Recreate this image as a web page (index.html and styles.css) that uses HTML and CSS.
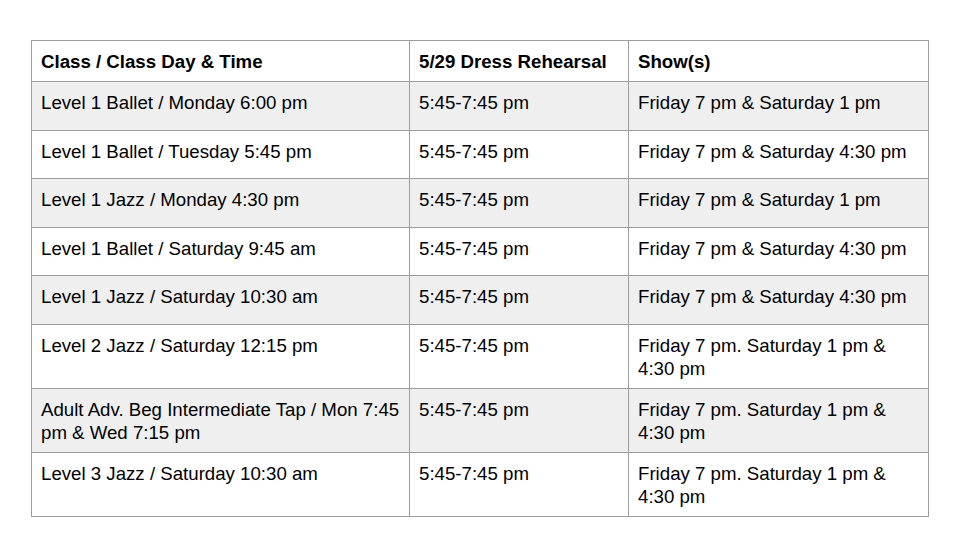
FILE: index.html
```html
<!DOCTYPE html>
<html>
<head>
<meta charset="utf-8">
<link rel="stylesheet" href="styles.css">
</head>
<body>
<div class="page">
<table class="sched">
<colgroup><col class="c1"><col class="c2"><col class="c3"></colgroup>
<thead>
<tr><th>Class / Class Day &amp; Time</th><th>5/29 Dress Rehearsal</th><th>Show(s)</th></tr>
</thead>
<tbody>
<tr class="alt"><td>Level 1 Ballet / Monday 6:00 pm</td><td>5:45-7:45 pm</td><td>Friday 7 pm &amp; Saturday 1 pm</td></tr>
<tr><td>Level 1 Ballet / Tuesday 5:45 pm</td><td>5:45-7:45 pm</td><td>Friday 7 pm &amp; Saturday 4:30 pm</td></tr>
<tr class="alt"><td>Level 1 Jazz / Monday 4:30 pm</td><td>5:45-7:45 pm</td><td>Friday 7 pm &amp; Saturday 1 pm</td></tr>
<tr><td>Level 1 Ballet / Saturday 9:45 am</td><td>5:45-7:45 pm</td><td>Friday 7 pm &amp; Saturday 4:30 pm</td></tr>
<tr class="alt"><td>Level 1 Jazz / Saturday 10:30 am</td><td>5:45-7:45 pm</td><td>Friday 7 pm &amp; Saturday 4:30 pm</td></tr>
<tr><td>Level 2 Jazz / Saturday 12:15 pm</td><td>5:45-7:45 pm</td><td>Friday 7 pm. Saturday 1 pm &amp; 4:30 pm</td></tr>
<tr class="alt"><td>Adult Adv. Beg Intermediate Tap / Mon 7:45 pm &amp; Wed 7:15 pm</td><td>5:45-7:45 pm</td><td>Friday 7 pm. Saturday 1 pm &amp; 4:30 pm</td></tr>
<tr><td>Level 3 Jazz / Saturday 10:30 am</td><td>5:45-7:45 pm</td><td>Friday 7 pm. Saturday 1 pm &amp; 4:30 pm</td></tr>
</tbody>
</table>
</div>
</body>
</html>
```
FILE: styles.css
```css
html, body {
  margin: 0;
  padding: 0;
  background: #ffffff;
}
.page {
  width: 960px;
  height: 540px;
  padding: 40px 0 0 31px;
  box-sizing: border-box;
}
.sched {
  border-collapse: collapse;
  table-layout: fixed;
  width: 897px;
  font-family: "Liberation Sans", Arial, sans-serif;
  font-size: 18.67px;
  line-height: 23px;
  color: #000000;
}
.c1 { width: 378px; }
.c2 { width: 219px; }
.c3 { width: 300px; }
.sched th,
.sched td {
  border: 1px solid #9e9e9e;
  padding: 9px 9px 8px 9px;
  text-align: left;
  vertical-align: top;
}
.sched th {
  font-weight: bold;
  height: 23px;
}
.sched td {
  height: 30.5px;
}
.sched tr.alt td {
  background: #efefef;
}
```
